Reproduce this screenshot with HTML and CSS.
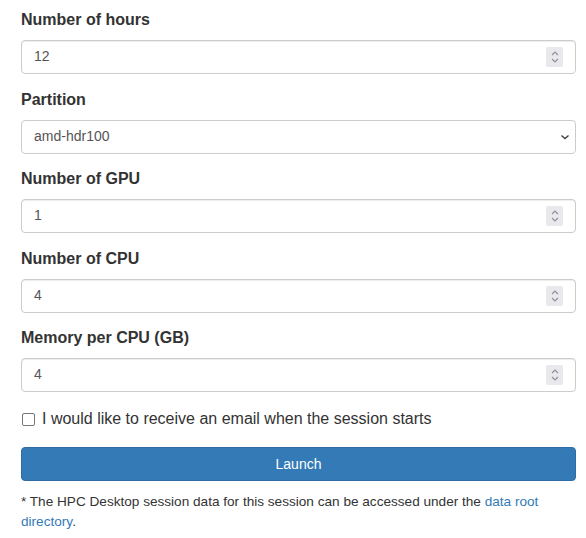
FILE: index.html
```html
<!DOCTYPE html>
<html>
<head>
<meta charset="utf-8">
<link rel="stylesheet" href="styles.css">
</head>
<body>
<form class="form">
  <div class="group">
    <label class="label">Number of hours</label>
    <div class="control"><span class="value">12</span><span class="spin"><svg width="10" height="16" viewBox="0 0 10 16"><path d="M2 6 L5 3 L8 6" fill="none" stroke="#8f8f9d" stroke-width="1.2"/><path d="M2 10 L5 13 L8 10" fill="none" stroke="#8f8f9d" stroke-width="1.2"/></svg></span></div>
  </div>
  <div class="group">
    <label class="label">Partition</label>
    <div class="control select"><span class="value">amd-hdr100</span><svg class="caret" width="12" height="8" viewBox="0 0 12 8"><path d="M2.5 2.5 L6 5.5 L9.5 2.5" fill="none" stroke="#444" stroke-width="1.5"/></svg></div>
  </div>
  <div class="group">
    <label class="label">Number of GPU</label>
    <div class="control"><span class="value">1</span><span class="spin"><svg width="10" height="16" viewBox="0 0 10 16"><path d="M2 6 L5 3 L8 6" fill="none" stroke="#8f8f9d" stroke-width="1.2"/><path d="M2 10 L5 13 L8 10" fill="none" stroke="#8f8f9d" stroke-width="1.2"/></svg></span></div>
  </div>
  <div class="group">
    <label class="label">Number of CPU</label>
    <div class="control"><span class="value">4</span><span class="spin"><svg width="10" height="16" viewBox="0 0 10 16"><path d="M2 6 L5 3 L8 6" fill="none" stroke="#8f8f9d" stroke-width="1.2"/><path d="M2 10 L5 13 L8 10" fill="none" stroke="#8f8f9d" stroke-width="1.2"/></svg></span></div>
  </div>
  <div class="group">
    <label class="label">Memory per CPU (GB)</label>
    <div class="control"><span class="value">4</span><span class="spin"><svg width="10" height="16" viewBox="0 0 10 16"><path d="M2 6 L5 3 L8 6" fill="none" stroke="#8f8f9d" stroke-width="1.2"/><path d="M2 10 L5 13 L8 10" fill="none" stroke="#8f8f9d" stroke-width="1.2"/></svg></span></div>
  </div>
  <div class="check">
    <span class="box"></span>
    <span class="check-text">I would like to receive an email when the session starts</span>
  </div>
  <div class="btn">Launch</div>
  <p class="note">* The HPC Desktop session data for this session can be accessed under the <a class="link" href="#">data root directory</a>.</p>
</form>
</body>
</html>
```

FILE: styles.css
```css
html, body {
  margin: 0;
  padding: 0;
  background: #fff;
}
body {
  font-family: "Liberation Sans", Arial, sans-serif;
  color: #333;
  font-size: 14px;
  line-height: 20px;
}
.form {
  padding: 9px 10px 0 21px;
  display: flex;
  flex-direction: column;
}
.group {
  display: flex;
  flex-direction: column;
  margin-bottom: 14.5px;
}
.label {
  font-size: 16px;
  font-weight: bold;
  line-height: 22px;
  margin-bottom: 9px;
}
.control {
  box-sizing: border-box;
  height: 34px;
  border: 1px solid #ccc;
  border-radius: 4px;
  display: flex;
  align-items: center;
  padding: 0 12px;
  color: #555;
  font-size: 14px;
  box-shadow: inset 0 1px 1px rgba(0,0,0,.075);
}
.value {
  flex: 1;
  margin-top: -2px;
}
.spin {
  width: 17px;
  height: 20px;
  background: #e9e9ed;
  border-radius: 2px;
  display: flex;
  align-items: center;
  justify-content: center;
}
.select {
  padding-right: 4px;
  box-shadow: none;
}
.check {
  display: flex;
  align-items: center;
  margin-top: 1.5px;
  gap: 7px;
  padding-left: 1px;
}
.box {
  box-sizing: border-box;
  width: 13px;
  height: 13px;
  border: 1.5px solid #767676;
  border-radius: 2px;
}
.check-text {
  font-size: 16px;
  line-height: 22px;
}
.btn {
  margin-top: 17px;
  box-sizing: border-box;
  height: 34px;
  background: #337ab7;
  border: 1px solid #2e6da4;
  border-radius: 4px;
  color: #fff;
  font-size: 14px;
  display: flex;
  align-items: center;
  justify-content: center;
}
.note {
  margin: 11px 0 0 0;
  font-size: 13.6px;
  line-height: 20px;
}
.link {
  color: #337ab7;
  text-decoration: none;
}
```
